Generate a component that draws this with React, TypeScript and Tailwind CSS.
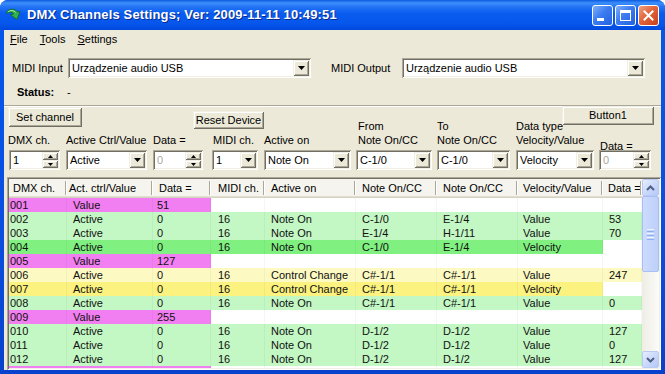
import React from "react";

const sunken =
  "shadow-[inset_1px_1px_0_#aca899,inset_-1px_-1px_0_#ffffff,inset_2px_2px_0_#716f64,inset_-2px_-2px_0_#f1efe2]";
const raised =
  "shadow-[inset_1px_1px_0_#f1efe2,inset_-1px_-1px_0_#716f64,inset_2px_2px_0_#ffffff,inset_-2px_-2px_0_#aca899]";

function Tri({ up = false, small = false }: { up?: boolean; small?: boolean }) {
  if (small) {
    return (
      <svg width="5" height="3" viewBox="0 0 5 3">
        <path d={up ? "M2.5 0 L5 3 L0 3Z" : "M0 0 L5 0 L2.5 3Z"} fill="#000" />
      </svg>
    );
  }
  return (
    <svg width="7" height="4" viewBox="0 0 7 4">
      <path d="M0 0 L7 0 L3.5 4Z" fill="#000" />
    </svg>
  );
}

function Combo({ className, text }: { className: string; text: string }) {
  return (
    <div className={`h-[20px] bg-white flex p-[2px] ${sunken} ${className}`}>
      <span className="flex-1 pl-[2px] leading-[16px] whitespace-nowrap overflow-hidden">{text}</span>
      <div className={`w-[16px] h-[16px] bg-[#ece9d8] flex items-center justify-center ${raised}`}>
        <Tri />
      </div>
    </div>
  );
}

function Spin({ className, text, disabled = false }: { className: string; text: string; disabled?: boolean }) {
  return (
    <div className={`h-[20px] bg-white flex p-[2px] ${sunken} ${className}`}>
      <span className={`flex-1 pl-[2px] leading-[16px] ${disabled ? "text-[#aca899]" : ""}`}>{text}</span>
      <div className="w-[16px] h-[16px] flex flex-col">
        <div className={`h-[8px] bg-[#ece9d8] flex items-center justify-center ${raised}`}>
          <Tri up small />
        </div>
        <div className={`h-[8px] bg-[#ece9d8] flex items-center justify-center ${raised}`}>
          <Tri small />
        </div>
      </div>
    </div>
  );
}

function Btn({ className, children }: { className: string; children: React.ReactNode }) {
  return (
    <div className={`bg-[#ece9d8] flex items-center justify-center leading-[13px] ${raised} ${className}`}>
      {children}
    </div>
  );
}

function TitleBar() {
  return (
    <div className="h-[30px] shrink-0 flex items-center pl-[5px] pr-[6px] bg-[linear-gradient(180deg,#0b5ae0_0%,#3d8ffb_10%,#2474f4_22%,#0a5cf0_45%,#0656ec_80%,#0048dc_100%)]">
      <svg width="16" height="16" viewBox="0 0 16 16" className="shrink-0">
        <path d="M1.5 5 C4 1.5 10 1 12.5 5 L15 4.5 L12 12.5 L5.5 8 L8.5 7 C7.5 5 4.5 4.5 2.5 6.5 Z" fill="#33b04f" stroke="#126628" strokeWidth="0.9" />
        <path d="M3 5 C5 3 9 3 10.5 5.5" stroke="#a6ecb0" strokeWidth="1" fill="none" />
      </svg>
      <span className="ml-[6px] text-white font-bold text-[13px] tracking-[0.15px] [text-shadow:1px_1px_0_#0a2b8a] whitespace-nowrap">
        DMX Channels Settings; Ver: 2009-11-11 10:49:51
      </span>
      <div className="ml-auto flex gap-[2px] mt-[1px]">
        <div className="w-[21px] h-[21px] rounded-[3px] border border-white bg-[linear-gradient(135deg,#7fb0fb_0%,#3c7cf0_45%,#2460e0_100%)] flex items-end pl-[4px] pb-[4px]">
          <div className="w-[7px] h-[3px] bg-white" />
        </div>
        <div className="w-[21px] h-[21px] rounded-[3px] border border-white bg-[linear-gradient(135deg,#7fb0fb_0%,#3c7cf0_45%,#2460e0_100%)] flex items-center justify-center">
          <div className="w-[11px] h-[11px] border border-white border-t-[3px]" />
        </div>
        <div className="w-[21px] h-[21px] rounded-[3px] border border-white bg-[linear-gradient(135deg,#f0a080_0%,#e2643c_45%,#c8421c_100%)] flex items-center justify-center">
          <svg width="11" height="11" viewBox="0 0 11 11">
            <path d="M1.5 1.5 L9.5 9.5 M9.5 1.5 L1.5 9.5" stroke="#fff" strokeWidth="2" strokeLinecap="square" />
          </svg>
        </div>
      </div>
    </div>
  );
}

const colW = ["w-[58px]", "w-[86px]", "w-[58px]", "w-[54px]", "w-[91px]", "w-[81px]", "w-[81px]", "w-[85px]", "w-[39px]"];
const cellPl = ["pl-[1px]", "pl-[6px]", "pl-[4px]", "pl-[7px]", "pl-[6px]", "pl-[6px]", "pl-[6px]", "pl-[5px]", "pl-[6px]"];
const headPl = ["pl-[4px]", "pl-[2px]", "pl-[6px]", "pl-[7px]", "pl-[6px]", "pl-[6px]", "pl-[6px]", "pl-[5px]", "pl-[5px]"];
const headers = ["DMX ch.", "Act. ctrl/Value", "Data =", "MIDI ch.", "Active on", "Note On/CC", "Note On/CC", "Velocity/Value", "Data ="];

type Row = { cells: string[]; a: string; b: string; c: string };

const PINK = "bg-[#f27ff2]";
const WHITE = "bg-white";
const GREEN = "bg-[#c3f7c3]";
const BGREEN = "bg-[#80f080]";
const LYEL = "bg-[#fdf9c2]";
const YEL = "bg-[#fbf27f]";

const valRow = (d: string, v: string): Row => ({ cells: [d, "Value", v, "", "", "", "", "", ""], a: PINK, b: WHITE, c: WHITE });

const rows: Row[] = [
  valRow("001", "51"),
  { cells: ["002", "Active", "0", "16", "Note On", "C-1/0", "E-1/4", "Value", "53"], a: GREEN, b: GREEN, c: GREEN },
  { cells: ["003", "Active", "0", "16", "Note On", "E-1/4", "H-1/11", "Value", "70"], a: GREEN, b: GREEN, c: GREEN },
  { cells: ["004", "Active", "0", "16", "Note On", "C-1/0", "E-1/4", "Velocity", ""], a: BGREEN, b: BGREEN, c: WHITE },
  valRow("005", "127"),
  { cells: ["006", "Active", "0", "16", "Control Change", "C#-1/1", "C#-1/1", "Value", "247"], a: LYEL, b: LYEL, c: LYEL },
  { cells: ["007", "Active", "0", "16", "Control Change", "C#-1/1", "C#-1/1", "Velocity", ""], a: YEL, b: YEL, c: WHITE },
  { cells: ["008", "Active", "0", "16", "Note On", "C#-1/1", "C#-1/1", "Value", "0"], a: GREEN, b: GREEN, c: GREEN },
  valRow("009", "255"),
  { cells: ["010", "Active", "0", "16", "Note On", "D-1/2", "D-1/2", "Value", "127"], a: GREEN, b: GREEN, c: GREEN },
  { cells: ["011", "Active", "0", "16", "Note On", "D-1/2", "D-1/2", "Value", "0"], a: GREEN, b: GREEN, c: GREEN },
  { cells: ["012", "Active", "0", "16", "Note On", "D-1/2", "D-1/2", "Value", "127"], a: GREEN, b: GREEN, c: GREEN },
  { cells: ["", "", "", "", "", "", "", "", ""], a: PINK, b: WHITE, c: WHITE },
];

function ScrollBtn({ up }: { up: boolean }) {
  return (
    <div className="w-[17px] h-[17px] shrink-0 rounded-[2px] border border-[#b9cbf3] bg-[linear-gradient(135deg,#e6eefe_0%,#c6d6fb_60%,#b4c8f7_100%)] flex items-center justify-center">
      <svg width="9" height="6" viewBox="0 0 9 6">
        <path d={up ? "M1 5 L4.5 1.5 L8 5" : "M1 1 L4.5 4.5 L8 1"} stroke="#4d6185" strokeWidth="2" fill="none" />
      </svg>
    </div>
  );
}

function ScrollBar() {
  return (
    <div className="w-[17px] h-full flex flex-col bg-[linear-gradient(90deg,#eeede5,#fbfbf8)]">
      <ScrollBtn up />
      <div className="h-[76px] shrink-0 rounded-[2px] border border-[#a8bff3] bg-[linear-gradient(90deg,#cddbfd,#bdd0fb)] flex flex-col items-center justify-center gap-[1px]">
        <div className="w-[7px] h-[1px] bg-[#eef4fe]" />
        <div className="w-[7px] h-[1px] bg-[#8fb0f0]" />
        <div className="w-[7px] h-[1px] bg-[#eef4fe]" />
        <div className="w-[7px] h-[1px] bg-[#8fb0f0]" />
        <div className="w-[7px] h-[1px] bg-[#eef4fe]" />
        <div className="w-[7px] h-[1px] bg-[#8fb0f0]" />
      </div>
      <div className="flex-1" />
      <ScrollBtn up={false} />
    </div>
  );
}

function Table() {
  return (
    <div className={`mt-[7px] ml-[3px] h-[193px] p-[2px] bg-white ${sunken}`}>
      <div className="h-full flex">
        <div className="flex-1 flex flex-col overflow-hidden">
          <div className="h-[19px] shrink-0 flex bg-[#f5f4ee] shadow-[inset_0_-1px_0_#d6d2c2,inset_0_-2px_0_#e2decd]">
            {headers.map((h, i) => (
              <div key={i} className={`${colW[i]} ${headPl[i]} shrink-0 relative leading-[19px] whitespace-nowrap overflow-hidden`}>
                {h}
                <div className="absolute right-0 top-[2px] bottom-[3px] w-[2px] border-l border-l-[#aca899] border-r border-r-white" />
              </div>
            ))}
          </div>
          {rows.map((r, ri) => (
            <div key={ri} className="h-[14px] shrink-0 flex">
              {r.cells.map((c, ci) => {
                const bg = ci < 3 ? r.a : ci < 8 ? r.b : r.c;
                return (
                  <div
                    key={ci}
                    className={`${colW[ci]} ${cellPl[ci]} ${bg} shrink-0 leading-[14px] whitespace-nowrap text-[#111] shadow-[inset_-1px_0_0_rgba(0,0,0,0.035)]`}
                  >
                    {c}
                  </div>
                );
              })}
            </div>
          ))}
        </div>
        <ScrollBar />
      </div>
    </div>
  );
}

export default function App() {
  return (
    <div className="w-[665px] h-[374px] bg-white font-['Liberation_Sans',Arial,sans-serif] text-[11px] text-black">
      <div className="w-full h-full flex flex-col rounded-t-[8px] overflow-hidden bg-[#0a50e4]">
        <TitleBar />
        <div className="flex-1 flex px-[4px] pb-[4px] bg-[linear-gradient(180deg,#0656ec,#0a4ee0_60%,#0842cc)]">
          <div className="flex-1 bg-[#ece9d8] flex flex-col">
            {/* menu */}
            <div className="h-[18px] shrink-0 flex items-center">
              <span className="px-[6px]"><span className="underline">F</span>ile</span>
              <span className="px-[6px]"><span className="underline">T</span>ools</span>
              <span className="px-[6px]"><span className="underline">S</span>ettings</span>
            </div>
            {/* MIDI row */}
            <div className="mt-[10px] h-[20px] flex items-center pl-[8px]">
              <span className="w-[56px] whitespace-nowrap">MIDI Input</span>
              <Combo className="w-[243px]" text="Urządzenie audio USB" />
              <span className="ml-[20px] w-[71px] whitespace-nowrap">MIDI Output</span>
              <Combo className="w-[243px]" text="Urządzenie audio USB" />
            </div>
            {/* status */}
            <div className="mt-[8px] h-[13px] leading-[13px] flex pl-[13px]">
              <span className="w-[50px] font-bold">Status:</span>
              <span>-</span>
            </div>
            {/* groove */}
            <div className="mt-[6px] h-[2px] border-t border-t-[#aca899] border-b border-b-white" />
            {/* buttons */}
            <div className="h-[21px] flex items-start">
              <Btn className="ml-[4px] h-[20px] w-[74px]">Set channel</Btn>
              <Btn className="ml-[111px] mt-[4px] h-[18px] w-[71px]">Reset Device</Btn>
              <Btn className="ml-auto mr-[7px] -mt-[1px] h-[19px] w-[92px] relative z-10">Button1</Btn>
            </div>
            {/* controls */}
            <div className="-mt-[9px] h-[51px] flex items-end pl-[5px]">
              <div className="w-[57px] flex flex-col gap-[3px]">
                <span className="-ml-[1px] leading-[14px]">DMX ch.</span>
                <Spin className="w-[51px]" text="1" />
              </div>
              <div className="w-[87px] flex flex-col gap-[3px]">
                <span className="leading-[14px] whitespace-nowrap">Active Ctrl/Value</span>
                <Combo className="w-[81px]" text="Active" />
              </div>
              <div className="w-[59px] flex flex-col gap-[3px]">
                <span className="leading-[14px]">Data =</span>
                <Spin className="w-[50px]" text="0" disabled />
              </div>
              <div className="w-[52px] flex flex-col gap-[3px]">
                <span className="pl-[1px] leading-[14px] whitespace-nowrap">MIDI ch.</span>
                <Combo className="w-[46px]" text="1" />
              </div>
              <div className="w-[92px] flex flex-col gap-[3px]">
                <span className="leading-[14px]">Active on</span>
                <Combo className="w-[87px]" text="Note On" />
              </div>
              <div className="w-[81px] flex flex-col gap-[3px]">
                <span className="pl-[2px] leading-[14px] whitespace-nowrap">From<br />Note On/CC</span>
                <Combo className="w-[76px]" text="C-1/0" />
              </div>
              <div className="w-[79px] flex flex-col gap-[3px]">
                <span className="leading-[14px] whitespace-nowrap">To<br />Note On/CC</span>
                <Combo className="w-[73px]" text="C-1/0" />
              </div>
              <div className="w-[83px] flex flex-col gap-[3px]">
                <span className="leading-[14px] whitespace-nowrap">Data type<br />Velocity/Value</span>
                <Combo className="w-[78px]" text="Velocity" />
              </div>
              <div className="w-[58px] flex flex-col gap-[3px]">
                <span className="pl-[1px] leading-[14px] -mb-[6px] relative">Data =</span>
                <Spin className="w-[52px]" text="0" disabled />
              </div>
            </div>
            <Table />
          </div>
        </div>
      </div>
    </div>
  );
}
